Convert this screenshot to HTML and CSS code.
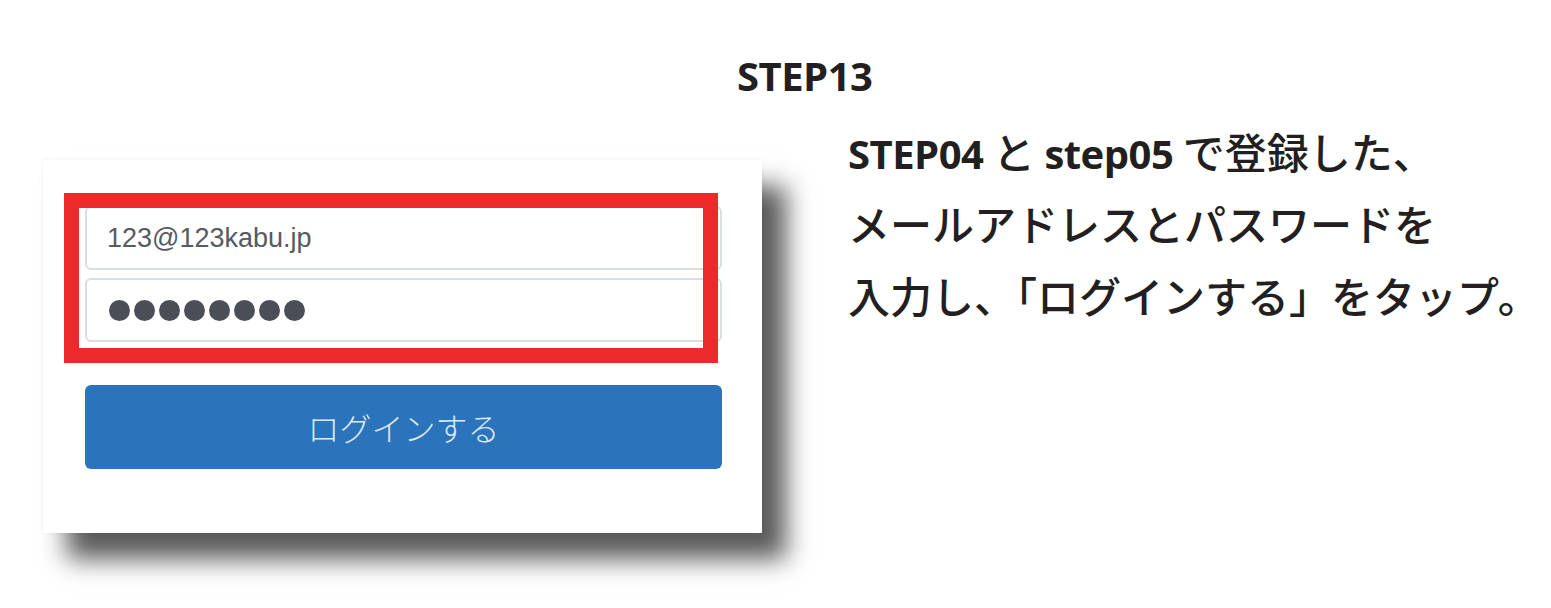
FILE: index.html
```html
<!DOCTYPE html>
<html lang="ja">

<head>
    <meta charset="UTF-8">
    <title>STEP13</title>
    <link rel="stylesheet" href="styles.css">
</head>

<body>
    <div class="page">
        <h1 class="step-title">STEP13</h1>
        <div class="row">
            <div class="card">
                <div class="field">123@123kabu.jp</div>
                <div class="field field-pass">
                    <span class="dot"></span><span class="dot"></span><span class="dot"></span><span class="dot"></span>
                    <span class="dot"></span><span class="dot"></span><span class="dot"></span><span class="dot"></span>
                </div>
                <div class="login-btn">ログインする</div>
                <!-- highlight frame over the two fields -->
                <div class="highlight"></div>
            </div>
            <p class="desc">
                <span class="en">STEP04</span> と <span class="en">step05</span> で登録した、<br>
                メールアドレスとパスワードを<br>
                入力し、「ログインする」をタップ。
            </p>
        </div>
    </div>
</body>

</html>
```

FILE: styles.css
```css
body {
    margin: 0;
    background-color: #fff;
    color: #231f20;
    font-family: 'Noto Sans CJK JP', sans-serif;
}

.page {
    padding-left: 43px;
    padding-bottom: 75px;
}

.step-title {
    margin: 0;
    padding-top: 52px;
    padding-left: 694px;
    font-family: 'Open Sans', sans-serif;
    font-weight: 700;
    font-size: 40px;
    line-height: 48px;
    letter-spacing: -0.5px;
}

.row {
    display: flex;
    align-items: flex-start;
    gap: 86px;
    margin-top: 15px;
}

.card {
    position: relative;
    flex: none;
    width: 719px;
    height: 373px;
    box-sizing: border-box;
    margin-top: 45px;
    padding: 46px 40px 0 42px;
    display: flex;
    flex-direction: column;
    gap: 8px;
    background-color: #fff;
    box-shadow: 24px 26px 24px rgba(0, 0, 0, 0.65), 0 0 5px rgba(0, 0, 0, 0.05);
}

.field {
    height: 64px;
    box-sizing: border-box;
    border: 2px solid #d9dee3;
    border-radius: 6px;
    padding: 0 20px;
    display: flex;
    align-items: center;
    font-family: 'Liberation Sans', Arial, sans-serif;
    font-size: 27px;
    color: #555b61;
    background-color: #fff;
}

.field-pass {
    gap: 4px;
    padding-left: 22px;
}

.dot {
    width: 21px;
    height: 21px;
    border-radius: 50%;
    background-color: #4a4f57;
}

.login-btn {
    margin-top: 35px;
    height: 84px;
    border-radius: 6px;
    background-color: #2b73bb;
    color: #dce9f6;
    font-size: 32px;
    font-weight: 300;
    display: flex;
    align-items: center;
    justify-content: center;
}

.highlight {
    position: absolute;
    left: 21px;
    top: 33px;
    width: 654px;
    height: 170px;
    box-sizing: border-box;
    border: 15px solid #ed2a2b;
}

.desc {
    margin: 0;
    font-size: 42px;
    font-weight: 500;
    line-height: 72px;
    white-space: nowrap;
}

.en {
    font-family: 'Open Sans', sans-serif;
    font-size: 40px;
    font-weight: 700;
    line-height: 1;
    letter-spacing: -0.5px;
}
```
